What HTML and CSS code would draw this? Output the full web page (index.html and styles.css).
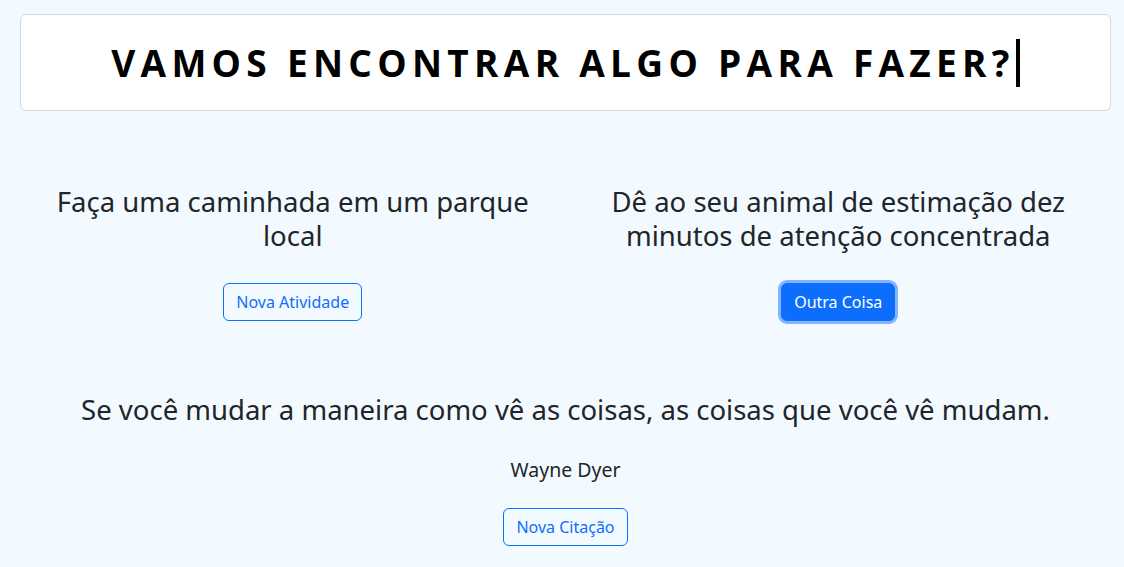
FILE: index.html
```html
<!DOCTYPE html>
<html lang="pt-BR">
<head>
<meta charset="utf-8">
<title>Vamos encontrar algo para fazer?</title>
<link rel="stylesheet" href="styles.css">
</head>
<body>
<main class="page">
  <header class="title-card">
    <h1 class="title"><span class="typed">VAMOS ENCONTRAR ALGO PARA FAZER?</span></h1>
  </header>
  <section class="activities">
    <div class="activity">
      <h3 class="activity-text">Faça uma caminhada em um parque local</h3>
      <button class="btn btn-outline">Nova Atividade</button>
    </div>
    <div class="activity">
      <h3 class="activity-text">Dê ao seu animal de estimação dez minutos de atenção concentrada</h3>
      <button class="btn btn-primary">Outra Coisa</button>
    </div>
  </section>
  <section class="quote">
    <h4 class="quote-text">Se você mudar a maneira como vê as coisas, as coisas que você vê mudam.</h4>
    <p class="quote-author">Wayne Dyer</p>
    <button class="btn btn-outline">Nova Citação</button>
  </section>
</main>
</body>
</html>
```
FILE: styles.css
```css
html, body {
  margin: 0;
  padding: 0;
  background: #f3faff;
  color: #212529;
  font-family: "Noto Sans", "Open Sans", sans-serif;
}
.page {
  padding: 14px 13px 0 20px;
  display: flex;
  flex-direction: column;
}
.title-card {
  background: #ffffff;
  border: 1px solid #d6d9dc;
  border-radius: 6px;
  height: 95px;
  display: flex;
  align-items: center;
  justify-content: center;
}
.title {
  margin: 0;
  font-family: "Open Sans", "Noto Sans", sans-serif;
  font-weight: 700;
  font-size: 37px;
  letter-spacing: 5.3px;
  color: #000;
  line-height: 48px;
}
.typed {
  display: inline-block;
  border-right: 4px solid #000;
  padding-right: 1px;
}
.activities {
  display: grid;
  grid-template-columns: 1fr 1fr;
  margin-top: 74px;
}
.activity {
  display: flex;
  flex-direction: column;
  align-items: center;
  padding: 0 12px;
}
.activity-text {
  margin: 0;
  font-weight: 400;
  font-size: 27.5px;
  line-height: 34px;
  text-align: center;
  max-width: 500px;
}
.btn {
  margin-top: 30px;
  font-family: inherit;
  font-size: 16px;
  line-height: 24px;
  padding: 6px 12px;
  border-radius: 6px;
  cursor: pointer;
}
.btn-outline {
  background: transparent;
  border: 1px solid #0d6efd;
  color: #0d6efd;
}
.btn-primary {
  background: #0d6efd;
  border: 1px solid #0d6efd;
  color: #fff;
  box-shadow: 0 0 0 3px rgba(13, 110, 253, 0.5);
}
.quote {
  display: flex;
  flex-direction: column;
  align-items: center;
  margin-top: 72px;
}
.quote-text {
  margin: 0;
  font-weight: 400;
  font-size: 27.5px;
  line-height: 33px;
  text-align: center;
}
.quote-author {
  margin: 31px 0 0;
  font-size: 19.5px;
  line-height: 26px;
}
.quote .btn {
  margin-top: 25px;
}
```
